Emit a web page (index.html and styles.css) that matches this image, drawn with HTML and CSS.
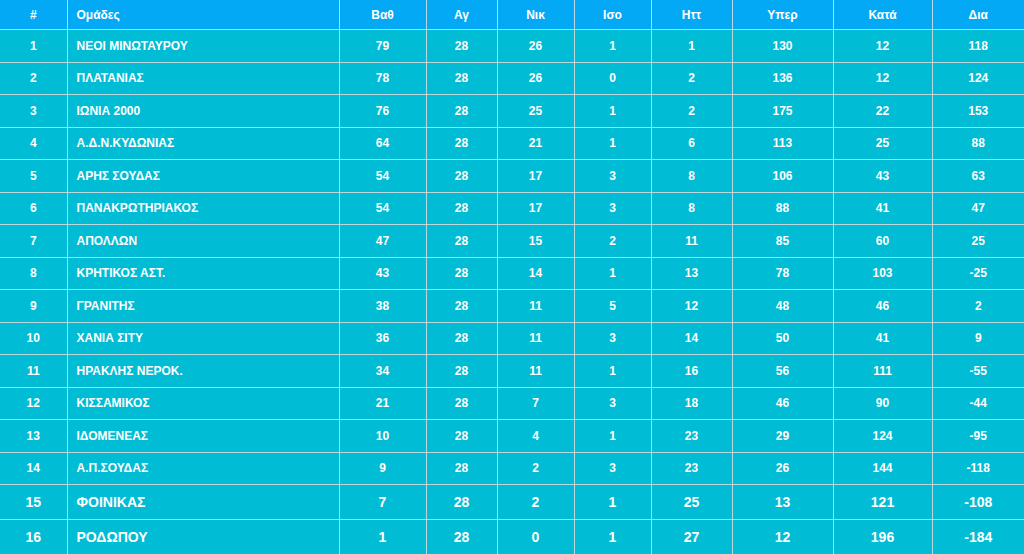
FILE: index.html
```html
<!DOCTYPE html>
<html lang="el">
<head>
<meta charset="utf-8">
<title>Βαθμολογία</title>
<link rel="stylesheet" href="styles.css">
</head>
<body>
<table class="standings">
  <colgroup>
    <col class="c-pos"><col class="c-team"><col class="c-pts"><col class="c-gp"><col class="c-w"><col class="c-d"><col class="c-l"><col class="c-gf"><col class="c-ga"><col class="c-gd">
  </colgroup>
  <thead>
    <tr><th>#</th><th class="team">Ομάδες</th><th>Βαθ</th><th>Αγ</th><th>Νικ</th><th>Ισο</th><th>Ηττ</th><th>Υπερ</th><th>Κατά</th><th>Δια</th></tr>
  </thead>
  <tbody>
    <tr><td>1</td><td class="team">ΝΕΟΙ ΜΙΝΩΤΑΥΡΟΥ</td><td>79</td><td>28</td><td>26</td><td>1</td><td>1</td><td>130</td><td>12</td><td>118</td></tr>
    <tr><td>2</td><td class="team">ΠΛΑΤΑΝΙΑΣ</td><td>78</td><td>28</td><td>26</td><td>0</td><td>2</td><td>136</td><td>12</td><td>124</td></tr>
    <tr><td>3</td><td class="team">ΙΩΝΙΑ 2000</td><td>76</td><td>28</td><td>25</td><td>1</td><td>2</td><td>175</td><td>22</td><td>153</td></tr>
    <tr><td>4</td><td class="team">Α.Δ.Ν.ΚΥΔΩΝΙΑΣ</td><td>64</td><td>28</td><td>21</td><td>1</td><td>6</td><td>113</td><td>25</td><td>88</td></tr>
    <tr><td>5</td><td class="team">ΑΡΗΣ ΣΟΥΔΑΣ</td><td>54</td><td>28</td><td>17</td><td>3</td><td>8</td><td>106</td><td>43</td><td>63</td></tr>
    <tr><td>6</td><td class="team">ΠΑΝΑΚΡΩΤΗΡΙΑΚΟΣ</td><td>54</td><td>28</td><td>17</td><td>3</td><td>8</td><td>88</td><td>41</td><td>47</td></tr>
    <tr><td>7</td><td class="team">ΑΠΟΛΛΩΝ</td><td>47</td><td>28</td><td>15</td><td>2</td><td>11</td><td>85</td><td>60</td><td>25</td></tr>
    <tr><td>8</td><td class="team">ΚΡΗΤΙΚΟΣ ΑΣΤ.</td><td>43</td><td>28</td><td>14</td><td>1</td><td>13</td><td>78</td><td>103</td><td>-25</td></tr>
    <tr><td>9</td><td class="team">ΓΡΑΝΙΤΗΣ</td><td>38</td><td>28</td><td>11</td><td>5</td><td>12</td><td>48</td><td>46</td><td>2</td></tr>
    <tr><td>10</td><td class="team">ΧΑΝΙΑ ΣΙΤΥ</td><td>36</td><td>28</td><td>11</td><td>3</td><td>14</td><td>50</td><td>41</td><td>9</td></tr>
    <tr><td>11</td><td class="team">ΗΡΑΚΛΗΣ ΝΕΡΟΚ.</td><td>34</td><td>28</td><td>11</td><td>1</td><td>16</td><td>56</td><td>111</td><td>-55</td></tr>
    <tr><td>12</td><td class="team">ΚΙΣΣΑΜΙΚΟΣ</td><td>21</td><td>28</td><td>7</td><td>3</td><td>18</td><td>46</td><td>90</td><td>-44</td></tr>
    <tr><td>13</td><td class="team">ΙΔΟΜΕΝΕΑΣ</td><td>10</td><td>28</td><td>4</td><td>1</td><td>23</td><td>29</td><td>124</td><td>-95</td></tr>
    <tr><td>14</td><td class="team">Α.Π.ΣΟΥΔΑΣ</td><td>9</td><td>28</td><td>2</td><td>3</td><td>23</td><td>26</td><td>144</td><td>-118</td></tr>
    <tr class="big"><td>15</td><td class="team">ΦΟΙΝΙΚΑΣ</td><td>7</td><td>28</td><td>2</td><td>1</td><td>25</td><td>13</td><td>121</td><td>-108</td></tr>
    <tr class="big"><td>16</td><td class="team">ΡΟΔΩΠΟΥ</td><td>1</td><td>28</td><td>0</td><td>1</td><td>27</td><td>12</td><td>196</td><td>-184</td></tr>
  </tbody>
</table>
</body>
</html>
```
FILE: styles.css
```css
html, body {
  margin: 0;
  padding: 0;
  background: #00bcd4;
}
.standings {
  width: 1024px;
  border-collapse: collapse;
  table-layout: fixed;
  font-family: "Liberation Sans", Arial, sans-serif;
  font-size: 12px;
  font-weight: bold;
  color: #ffffff;
  background: #00bcd4;
}
.c-pos { width: 67px; }
.c-team { width: 272px; }
.c-pts { width: 87px; }
.c-gp { width: 71px; }
.c-w { width: 77px; }
.c-d { width: 77px; }
.c-l { width: 81px; }
.c-gf { width: 101px; }
.c-ga { width: 99px; }
.c-gd { width: 92px; }

.standings th,
.standings td {
  border: 1px solid rgba(218, 222, 224, 0.85);
  text-align: center;
  vertical-align: middle;
  padding: 0 9px;
  white-space: nowrap;
}
.standings tr > :first-child { border-left: none; }
.standings tr > :last-child { border-right: none; }
.standings thead tr > * { border-top: none; }

.standings thead th {
  background: #03a9f4;
  font-weight: bold;
  height: 29px;
}
.standings tbody td { height: 31.5px; }
.standings .team { text-align: left; }
.standings tr.big td {
  font-size: 14px;
  height: 34px;
}
```
